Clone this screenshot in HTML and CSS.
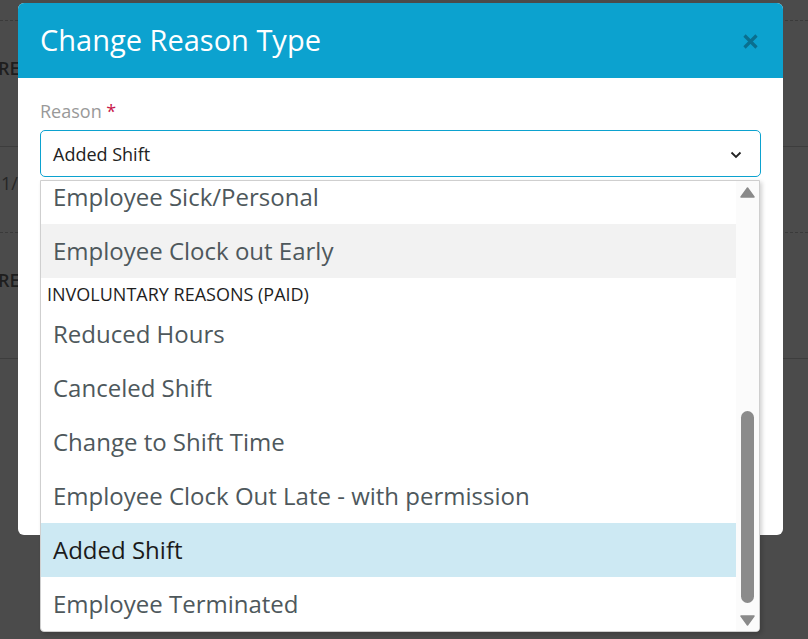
FILE: index.html
```html
<!DOCTYPE html>
<html lang="en">
<head>
<meta charset="utf-8">
<title>Change Reason Type</title>
<link rel="stylesheet" href="styles.css">
</head>
<body>
<div class="page">
  <div class="bg-row bg-top"></div>
  <div class="bg-row bg-r1 solid"><span class="bg-text">RE</span></div>
  <div class="bg-row bg-r2 dashed"><span class="bg-text thin">1/3</span></div>
  <div class="bg-row bg-r3 solid"><span class="bg-text">RE</span></div>
</div>

<div class="modal">
  <div class="modal-header">
    <h1 class="modal-title">Change Reason Type</h1>
    <button class="close" aria-label="Close">
      <svg width="15" height="15" viewBox="0 0 15 15"><path d="M1.5 1.5 L13.5 13.5 M13.5 1.5 L1.5 13.5" stroke="#0a6f8f" stroke-width="3.2" fill="none"/></svg>
    </button>
  </div>
  <div class="modal-body">
    <label class="field-label">Reason <span class="req">*</span></label>
    <div class="select-wrap">
      <div class="select">
        <span class="select-value">Added Shift</span>
        <svg class="chev" width="12" height="8" viewBox="0 0 12 8"><path d="M1.5 1.5 L6 6 L10.5 1.5" stroke="#222" stroke-width="1.8" fill="none"/></svg>
      </div>
      <div class="dropdown">
        <div class="list">
          <div class="list-inner">
            <div class="opt">Employee Sick/Personal</div>
            <div class="opt hover">Employee Clock out Early</div>
            <div class="group">INVOLUNTARY REASONS (PAID)</div>
            <div class="opt">Reduced Hours</div>
            <div class="opt">Canceled Shift</div>
            <div class="opt">Change to Shift Time</div>
            <div class="opt">Employee Clock Out Late - with permission</div>
            <div class="opt selected">Added Shift</div>
            <div class="opt">Employee Terminated</div>
          </div>
        </div>
        <div class="scrollbar">
          <svg class="arrow up" width="15" height="11" viewBox="0 0 15 11"><polygon points="7.5,1 14,10 1,10" fill="#8a8a8a" stroke="#8a8a8a" stroke-width="1.5" stroke-linejoin="round"/></svg>
          <div class="thumb"></div>
          <svg class="arrow down" width="15" height="11" viewBox="0 0 15 11"><polygon points="1,1 14,1 7.5,10" fill="#8a8a8a" stroke="#8a8a8a" stroke-width="1.5" stroke-linejoin="round"/></svg>
        </div>
      </div>
    </div>
  </div>
</div>
</body>
</html>
```

FILE: styles.css
```css
* { box-sizing: border-box; }

html, body {
  margin: 0;
  padding: 0;
}

body {
  width: 808px;
  height: 639px;
  overflow: hidden;
  background: #4b4b4b;
  font-family: "Open Sans", "Noto Sans", sans-serif;
  position: relative;
}

/* underlying page (dimmed by backdrop) */
.page {
  display: flex;
  flex-direction: column;
}

.bg-row {
  display: flex;
  align-items: center;
  border-bottom: 1px solid #3d3d3d;
}

.bg-row.dashed { border-bottom: 1px dashed #3a3a3a; }

.bg-top {
  height: 21px;
  border-bottom: 1px dashed #3a3a3a;
}

.bg-r1 { height: 126px; align-items: flex-start; padding-top: 35px; }
.bg-r2 { height: 86px; align-items: flex-start; padding-top: 24px; }
.bg-r3 { height: 126px; align-items: flex-start; padding-top: 35px; }

.bg-text {
  margin-left: -2px;
  font-size: 18px;
  font-weight: 600;
  color: #1e1e1e;
  line-height: 24px;
}

.bg-text.thin { font-weight: 400; color: #262626; margin-left: 1px; }

/* modal */
.modal {
  position: absolute;
  left: 18px;
  top: 3px;
  width: 765px;
  height: 532px;
  background: #fff;
  border-radius: 6px;
}

.modal-header {
  height: 75px;
  background: #0ca2cf;
  border-radius: 6px 6px 0 0;
  display: flex;
  align-items: center;
  justify-content: space-between;
  padding: 0 25px 0 22px;
}

.modal-title {
  margin: 0;
  font-size: 29px;
  font-weight: 400;
  color: #fff;
  line-height: 36px;
  padding-bottom: 2px;
}

.close {
  border: 0;
  background: none;
  padding: 0;
  width: 15px;
  height: 15px;
  display: flex;
  margin-top: 1px;
}

.modal-body {
  padding: 20px 22px 0 22px;
}

.field-label {
  display: block;
  font-size: 18px;
  line-height: 26px;
  color: #999;
}

.req { color: #c8174a; }

.select-wrap {
  position: relative;
  margin-top: 6px;
}

.select {
  height: 47px;
  border: 1px solid #0ca2cf;
  border-radius: 5px;
  display: flex;
  align-items: center;
  justify-content: space-between;
  padding: 0 18px 0 12px;
}

.select-value {
  font-size: 18px;
  color: #222;
}

.chev { margin-top: 2px; }

.dropdown {
  position: absolute;
  top: 50px;
  left: 0;
  width: 720px;
  height: 452px;
  background: #fff;
  border: 1px solid #cfcfcf;
  border-radius: 0 0 4px 4px;
  box-shadow: 2px 2px 4px rgba(0, 0, 0, 0.18);
  display: flex;
  overflow: hidden;
}

.list {
  flex: 1;
  overflow: hidden;
}

.list-inner {
  margin-top: -11px;
}

.opt {
  height: 54px;
  line-height: 54px;
  padding-left: 12px;
  font-size: 24px;
  color: #4e585c;
  white-space: nowrap;
}

.opt.hover { background: #f2f2f2; }

.opt.selected {
  background: #cde9f3;
  color: #1b1b1b;
}

.group {
  height: 29px;
  padding: 4px 0 0 6px;
  line-height: 24px;
  font-size: 18px;
  color: #1e1e1e;
}

.scrollbar {
  width: 23px;
  background: #fbfbfb;
  display: flex;
  flex-direction: column;
  align-items: center;
  padding-top: 6px;
}

.arrow { display: block; flex: none; }

.thumb {
  margin-top: 213px;
  width: 13px;
  height: 192px;
  border-radius: 7px;
  background: #8b8b8b;
  flex: none;
}

.arrow.down { margin-top: 12px; }
```
